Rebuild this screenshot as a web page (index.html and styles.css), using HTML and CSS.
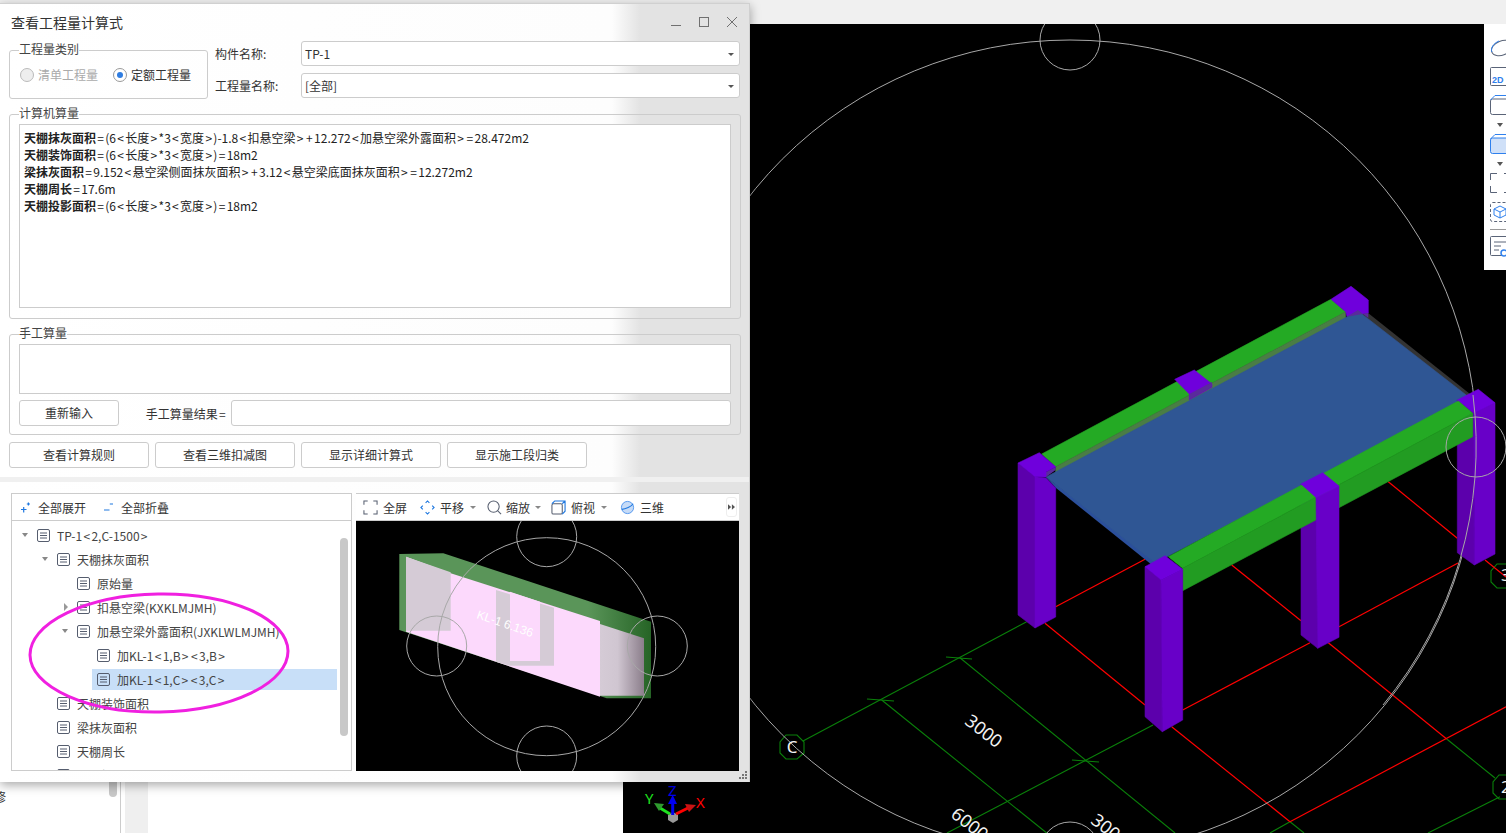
FILE: index.html
```html
<!DOCTYPE html>
<html lang="zh-CN">
<head>
    <meta charset="UTF-8">
    <title>查看工程量计算式</title>
    <link rel="stylesheet" href="styles.css">
</head>
<body>
    <div class="app">
        <div class="top-bar"></div>
        <div class="workspace">
            <div class="side-list">
                <div class="side-scroll"></div>
                <div class="side-text">修</div>
            </div>
            <div class="side-strip"></div>
            <div class="side-main"></div>

            <div class="viewport">
                <svg class="scene" viewBox="623 24 883 809">
                    <!-- axis grid -->
                    <g class="grid-green">
                        <line x1="803" y1="741" x2="1026.7" y2="621.7"/>
                        <line x1="947" y1="833" x2="1153" y2="725"/>
                        <line x1="881.7" y1="700" x2="1046.7" y2="833"/>
                        <line x1="959.3" y1="657.3" x2="1175" y2="833"/>
                        <line x1="1446.7" y1="739" x2="1495" y2="778"/>
                        <line x1="1290" y1="821.7" x2="1304" y2="833"/>
                        <line x1="1290" y1="821.7" x2="1270" y2="833"/>
                        <line x1="1500" y1="796.7" x2="1428" y2="833"/>
                        <line x1="867" y1="699" x2="894" y2="701"/>
                        <line x1="946" y1="657" x2="972" y2="659"/>
                        <line x1="1072" y1="760" x2="1099" y2="762"/>
                        <polygon points="786,735 797,735 804,742 804,753 797,759 786,759 780,753 780,742"/>
                        <polygon points="1497,564 1508,564 1514,571 1514,582 1508,588 1497,588 1491,582 1491,571"/>
                        <polygon points="1499,775 1510,775 1516,782 1516,793 1510,799 1499,799 1493,793 1493,782"/>
                    </g>
                    <g class="grid-red">
                        <line x1="1055.7" y1="606.7" x2="1145" y2="559.3"/>
                        <line x1="1045" y1="623.3" x2="1145" y2="705"/>
                        <line x1="1171.7" y1="726.7" x2="1290" y2="821.7"/>
                        <line x1="1182.7" y1="710" x2="1310" y2="642.7"/>
                        <line x1="1328.3" y1="642.7" x2="1446.7" y2="739"/>
                        <line x1="1506" y1="706.7" x2="1290" y2="821.7"/>
                        <line x1="1339" y1="626.7" x2="1458" y2="563"/>
                        <line x1="1231.7" y1="565" x2="1301" y2="620.7"/>
                        <line x1="1388.3" y1="481.7" x2="1457.3" y2="538.3"/>
                        <line x1="1485" y1="560" x2="1506" y2="577"/>
                    </g>
                    <g class="grid-white">
                        <circle cx="1070" cy="447" r="407"/>
                        <circle cx="1070" cy="40" r="30"/>
                        <circle cx="1070" cy="852" r="30"/>
                    </g>

                    <!-- far side of the slab -->
                    <polygon class="c-edge" points="1358,305 1470,394 1467,398 1356,310"/>

                    <!-- back beam and columns -->
                    <polygon class="c-beam-top" points="1041.7,454 1331,299.3 1345.7,311.7 1055.7,466.7"/>
                    <polygon class="c-beam-under" points="1055.7,466.7 1345.7,311.7 1345.7,319 1055.7,474"/>
                    <polygon class="c-col-top" points="1331,299.3 1351,286.3 1368.3,300 1368.3,313 1347,316.7 1345.7,311.7"/>
                    <polygon class="c-col-top" points="1174.7,379.3 1194.3,370 1212,384 1212,387.3 1189.3,400 1189.3,394"/>

                    <!-- slab -->
                    <polygon class="c-slab-edge" points="1046,477 1056,488 1152,565 1158,561"/>
                    <polygon class="c-slab" points="1046,477 1358,311 1470,398 1155,563"/>
                    <polygon class="c-col-over" points="1347,316.7 1358,310 1368.3,318 1368.3,313"/>
                    <polygon class="c-col-over" points="1189.3,394 1212,382 1212,387.3 1189.3,400"/>
                    <polygon class="c-col-over" points="1046,477 1055.7,470 1055.7,466.7 1046,472"/>

                    <!-- column A -->
                    <polygon class="c-col-left" points="1018,463 1035,476.7 1035,628 1018,615"/>
                    <polygon class="c-col-right" points="1035,476.7 1046,478 1055.7,488 1055.7,617 1035,628"/>
                    <polygon class="c-col-top" points="1018,463 1039.3,452.7 1055.7,466.7 1046,472 1046,477 1035,476.7"/>

                    <!-- column D, behind the front beam -->
                    <polygon class="c-col-left" points="1457.3,400 1474,413.3 1474.3,565 1457.3,552.7"/>
                    <polygon class="c-col-right" points="1474,413.3 1495,402.7 1495,554 1474.3,565"/>
                    <polygon class="c-col-top" points="1457.3,400 1478.3,389.3 1495,402.7 1474,413.3"/>

                    <!-- column C, left face -->
                    <polygon class="c-col-left" points="1301,484 1317.7,496.7 1317.7,648.3 1301,635"/>

                    <!-- front beam -->
                    <polygon class="c-beam-top" points="1168.3,556.7 1458.3,401 1472.7,413.3 1182.7,568.3"/>
                    <polygon class="c-beam-front" points="1182.7,568.3 1472.7,413.3 1472.7,436.7 1182.7,590.7"/>

                    <!-- column C, right face and top -->
                    <polygon class="c-col-right" points="1316,497.5 1339,486 1339,637.3 1317.7,648.3"/>
                    <polygon class="c-col-top" points="1301,484 1322.7,472.7 1339,486 1316,497.5"/>

                    <!-- column B -->
                    <polygon class="c-col-left" points="1145,566.7 1161,580 1162.3,731.7 1145,716.7"/>
                    <polygon class="c-col-right" points="1161,580 1182.7,569.3 1182.7,720 1162.3,731.7"/>
                    <polygon class="c-col-top" points="1145,566.7 1165,555.7 1182.7,569.3 1161,580"/>

                    <circle class="ring-front" cx="1476" cy="447" r="30"/>
                    <path class="ring-front" d="M1473 395 A407 407 0 0 1 1383 705"/>

                    <text class="dim-text" transform="translate(980 736) rotate(38)" text-anchor="middle">3000</text>
                    <text class="dim-text" transform="translate(966 829) rotate(38)" text-anchor="middle">6000</text>
                    <text class="dim-text" transform="translate(1102 832) rotate(38)" text-anchor="middle">300</text>
                    <text class="bubble-text" x="792" y="753" text-anchor="middle">C</text>
                    <text class="bubble-text" x="1501" y="581">3</text>
                    <text class="bubble-text" x="1501" y="793">2</text>

                    <!-- axis gizmo -->
                    <polygon class="gz-base" points="673,812 678,815 678,820 673,823 668,820 668,815"/>
                    <path class="gz-x" d="M676 814 L688 808"/>
                    <polygon class="gz-x-head" points="685,804 696,805 689,812"/>
                    <path class="gz-y" d="M670 814 L660 808"/>
                    <polygon class="gz-y-head" points="654,803 664,804 659,811"/>
                    <path class="gz-z" d="M672.7 815 L672.7 802"/>
                    <polygon class="gz-z-head" points="672.7,795 677,804 668,804"/>
                    <text class="gz-label gz-lx" x="696" y="808">X</text>
                    <text class="gz-label gz-ly" x="645" y="804">Y</text>
                    <text class="gz-label gz-lz" x="668" y="796">Z</text>
                </svg>

                <div class="view-tools">
                    <svg class="vt-icon" viewBox="0 0 20 20"><ellipse cx="12" cy="10" rx="11" ry="7" transform="rotate(-22 12 10)"/><path class="vt-blue" d="M2 14 C0 10 4 5 9 3"/></svg>
                    <svg class="vt-icon vt-tight" viewBox="0 0 20 20"><rect x=".5" y=".5" width="26" height="18" rx="1"/><text class="vt-2d" x="2" y="16">2D</text></svg>
                    <svg class="vt-icon vt-tight" viewBox="0 0 20 20"><rect x=".5" y="4" width="26" height="15.5" rx="2"/><path class="vt-blue" d="M.5 5 L5 .5 H26"/></svg>
                    <div class="vt-caret"></div>
                    <svg class="vt-icon vt-tight" viewBox="0 0 20 20"><rect class="vt-fill" x=".5" y="4" width="26" height="15.5" rx="2"/><path class="vt-blue" d="M.5 5 L5 .5 H26"/></svg>
                    <div class="vt-caret"></div>
                    <svg class="vt-icon" viewBox="0 0 20 20"><path d="M7 .5 H.5 V7 M.5 13 V19.5 H7 M14 .5 H20 M14 19.5 H20"/></svg>
                    <svg class="vt-icon vt-mid" viewBox="0 0 20 20"><rect class="vt-dash" x=".5" y=".5" width="26" height="19" rx="2"/><path class="vt-blue" d="M10 4 L16 7 V13 L10 16 L4 13 V7 Z M4 7 L10 10 L16 7 M10 10 V16"/></svg>
                    <div class="vt-sep"></div>
                    <svg class="vt-icon" viewBox="0 0 20 20"><rect x=".5" y=".5" width="26" height="19" rx="1"/><path d="M4 6 H16 M4 10 H11 M4 14 H9"/><circle class="vt-ring" cx="14" cy="17" r="3"/></svg>
                </div>
            </div>
        </div>

        <div class="dialog">
            <div class="title-bar">
                <span class="title-text">查看工程量计算式</span>
                <div class="win-btns">
                    <svg viewBox="0 0 12 12"><path d="M1 9.5 H11"/></svg>
                    <svg viewBox="0 0 12 12"><rect x="1.5" y="1.5" width="9" height="9"/></svg>
                    <svg viewBox="0 0 12 12"><path d="M1 1 L11 11 M11 1 L1 11"/></svg>
                </div>
            </div>

            <div class="dialog-top">
                <div class="top-form">
                    <div class="group type-group">
                        <span class="group-title">工程量类别</span>
                        <label class="radio disabled"><span class="radio-dot"></span>清单工程量</label>
                        <label class="radio"><span class="radio-dot checked"></span>定额工程量</label>
                    </div>
                    <div class="name-fields">
                        <div class="field-row">
                            <span class="field-label">构件名称:</span>
                            <div class="select">TP-1<span class="select-arrow"></span></div>
                        </div>
                        <div class="field-row">
                            <span class="field-label">工程量名称:</span>
                            <div class="select">[全部]<span class="select-arrow"></span></div>
                        </div>
                    </div>
                </div>

                <div class="group auto-group">
                    <span class="group-title">计算机算量</span>
                    <div class="text-box formula-box">
                        <div><b>天棚抹灰面积</b><i>=</i>(6<i>&lt;</i>长度<i>&gt;</i>*3<i>&lt;</i>宽度<i>&gt;</i>)-1.8<i>&lt;</i>扣悬空梁<i>&gt;</i><i>+</i>12.272<i>&lt;</i>加悬空梁外露面积<i>&gt;</i><i>=</i>28.472m2</div>
                        <div><b>天棚装饰面积</b><i>=</i>(6<i>&lt;</i>长度<i>&gt;</i>*3<i>&lt;</i>宽度<i>&gt;</i>)<i>=</i>18m2</div>
                        <div><b>梁抹灰面积</b><i>=</i>9.152<i>&lt;</i>悬空梁侧面抹灰面积<i>&gt;</i><i>+</i>3.12<i>&lt;</i>悬空梁底面抹灰面积<i>&gt;</i><i>=</i>12.272m2</div>
                        <div><b>天棚周长</b><i>=</i>17.6m</div>
                        <div><b>天棚投影面积</b><i>=</i>(6<i>&lt;</i>长度<i>&gt;</i>*3<i>&lt;</i>宽度<i>&gt;</i>)<i>=</i>18m2</div>
                    </div>
                </div>

                <div class="group manual-group">
                    <span class="group-title">手工算量</span>
                    <div class="text-box manual-box"></div>
                    <div class="manual-row">
                        <button class="btn retype-btn">重新输入</button>
                        <span class="result-label">手工算量结果<i>=</i></span>
                        <div class="result-input"></div>
                    </div>
                </div>

                <div class="action-row">
                    <button class="btn action-btn">查看计算规则</button>
                    <button class="btn action-btn">查看三维扣减图</button>
                    <button class="btn action-btn">显示详细计算式</button>
                    <button class="btn action-btn">显示施工段归类</button>
                </div>
            </div>

            <div class="splitter"></div>

            <div class="dialog-bottom">
                <div class="panel tree-panel">
                    <div class="panel-bar">
                        <span class="bar-item"><svg class="bar-icon" viewBox="0 0 14 14"><path class="blue-line" d="M1 9.5 H6.5 M3.7 7 V12.5 M6.8 4 H10 M8.4 2.4 V5.6"/></svg>全部展开</span>
                        <span class="bar-item"><svg class="bar-icon" viewBox="0 0 14 14"><path class="blue-line" d="M1 10 H6.5 M6.8 4 H10"/></svg>全部折叠</span>
                    </div>
                    <div class="tree">
                        <div class="tree-row d0"><span class="arrow down"></span><svg class="doc" viewBox="0 0 13 13"><rect x=".5" y=".5" width="12" height="12" rx="1.5"/><path d="M3 4 H10 M3 6.5 H10 M3 9 H10"/></svg>TP-1<i>&lt;</i>2,C-1500<i>&gt;</i></div>
                        <div class="tree-row d1"><span class="arrow down"></span><svg class="doc" viewBox="0 0 13 13"><rect x=".5" y=".5" width="12" height="12" rx="1.5"/><path d="M3 4 H10 M3 6.5 H10 M3 9 H10"/></svg>天棚抹灰面积</div>
                        <div class="tree-row d2"><span class="arrow"></span><svg class="doc" viewBox="0 0 13 13"><rect x=".5" y=".5" width="12" height="12" rx="1.5"/><path d="M3 4 H10 M3 6.5 H10 M3 9 H10"/></svg>原始量</div>
                        <div class="tree-row d2"><span class="arrow right"></span><svg class="doc" viewBox="0 0 13 13"><rect x=".5" y=".5" width="12" height="12" rx="1.5"/><path d="M3 4 H10 M3 6.5 H10 M3 9 H10"/></svg>扣悬空梁(KXKLMJMH)</div>
                        <div class="tree-row d2"><span class="arrow down"></span><svg class="doc" viewBox="0 0 13 13"><rect x=".5" y=".5" width="12" height="12" rx="1.5"/><path d="M3 4 H10 M3 6.5 H10 M3 9 H10"/></svg>加悬空梁外露面积(JXKLWLMJMH)</div>
                        <div class="tree-row d3"><span class="arrow"></span><svg class="doc" viewBox="0 0 13 13"><rect x=".5" y=".5" width="12" height="12" rx="1.5"/><path d="M3 4 H10 M3 6.5 H10 M3 9 H10"/></svg>加KL-1<i>&lt;</i>1,B<i>&gt;</i><i>&lt;</i>3,B<i>&gt;</i></div>
                        <div class="tree-row d3 selected"><span class="arrow"></span><svg class="doc" viewBox="0 0 13 13"><rect x=".5" y=".5" width="12" height="12" rx="1.5"/><path d="M3 4 H10 M3 6.5 H10 M3 9 H10"/></svg>加KL-1<i>&lt;</i>1,C<i>&gt;</i><i>&lt;</i>3,C<i>&gt;</i></div>
                        <div class="tree-row d1"><span class="arrow"></span><svg class="doc" viewBox="0 0 13 13"><rect x=".5" y=".5" width="12" height="12" rx="1.5"/><path d="M3 4 H10 M3 6.5 H10 M3 9 H10"/></svg>天棚装饰面积</div>
                        <div class="tree-row d1"><span class="arrow"></span><svg class="doc" viewBox="0 0 13 13"><rect x=".5" y=".5" width="12" height="12" rx="1.5"/><path d="M3 4 H10 M3 6.5 H10 M3 9 H10"/></svg>梁抹灰面积</div>
                        <div class="tree-row d1"><span class="arrow"></span><svg class="doc" viewBox="0 0 13 13"><rect x=".5" y=".5" width="12" height="12" rx="1.5"/><path d="M3 4 H10 M3 6.5 H10 M3 9 H10"/></svg>天棚周长</div>
                        <div class="tree-row d1"><span class="arrow"></span><svg class="doc" viewBox="0 0 13 13"><rect x=".5" y=".5" width="12" height="12" rx="1.5"/><path d="M3 4 H10 M3 6.5 H10 M3 9 H10"/></svg>天棚投影面积</div>
                        <div class="tree-scroll"></div>
                    </div>
                </div>

                <div class="panel view-panel">
                    <div class="panel-bar view-bar">
                        <span class="bar-item fit"><svg class="bar-icon wide" viewBox="0 0 16 16"><path class="dark-line" d="M5 1 H1 V5 M11 1 H15 V5 M5 15 H1 V11 M11 15 H15 V11"/></svg>全屏</span>
                        <span class="bar-item pan"><svg class="bar-icon wide" viewBox="0 0 16 16"><path class="blue-line" d="M6 3 L8 1 L10 3 M6 13 L8 15 L10 13 M3 6 L1 8 L3 10 M13 6 L15 8 L13 10"/></svg>平移<i class="mini-caret"></i></span>
                        <span class="bar-item zoom"><svg class="bar-icon wide" viewBox="0 0 16 16"><circle class="dark-line" cx="7" cy="7" r="6"/><path class="dark-line" d="M11.5 11.5 L15 15"/></svg>缩放<i class="mini-caret"></i></span>
                        <span class="bar-item top"><svg class="bar-icon wide" viewBox="0 0 16 16"><rect class="dark-line" x="1" y="4" width="11" height="11" rx="1.5"/><path class="blue-line" d="M1 4 L4 1 H15 V12 L12 15 M12 4 L15 1"/></svg>俯视<i class="mini-caret"></i></span>
                        <span class="bar-item three"><svg class="bar-icon wide" viewBox="0 0 16 16"><circle class="orb" cx="8" cy="8" r="6.5"/><path class="blue-line" d="M2 10 C6 10 12 7 14 4"/></svg>三维</span>
                        <span class="more-btn"><svg viewBox="0 0 9 7"><path d="M0 0 L4 3.5 L0 7 Z M5 0 L9 3.5 L5 7 Z"/></svg></span>
                    </div>
                    <svg class="preview" viewBox="356 521 383 250">
                        <defs>
                            <linearGradient id="fadeFace" x1="0" x2="1" y1="0" y2="0">
                                <stop offset="0" stop-color="#d5cbd6"/>
                                <stop offset=".4" stop-color="#d0c6d1"/>
                                <stop offset="1" stop-color="#8b7e8b"/>
                            </linearGradient>
                            <linearGradient id="fadeGreen" x1="0" x2="1" y1="0" y2="0">
                                <stop offset="0" stop-color="#5a9559"/>
                                <stop offset=".75" stop-color="#5a9559"/>
                                <stop offset="1" stop-color="#266426"/>
                            </linearGradient>
                        </defs>
                        <polygon fill="url(#fadeGreen)" points="399.3,554 443.3,553.3 651,621.7 651,698.3 606.7,698.3 399.3,630"/>
                        <polygon fill="#fcd9fc" points="406,556.7 450.7,573.3 600,621 600,696.7 406,631.7"/>
                        <polygon fill="#d5cbd6" points="406,556.7 450.7,572.3 450.7,630.7 406,630.7"/>
                        <polygon fill="#d5cbd6" points="496,590 554,607.7 554,665.7 510,665.7 496,661.7"/>
                        <polygon fill="#fcd9fc" points="510,591.7 540,601.7 540,661 510,661"/>
                        <polygon fill="url(#fadeFace)" points="600,624 644,638.3 644,695.7 600,695.7"/>
                        <g class="grid-white">
                            <circle cx="546.7" cy="646.7" r="109"/>
                            <circle cx="546.7" cy="536.7" r="30"/>
                            <circle cx="436.7" cy="646" r="30"/>
                            <circle cx="657.3" cy="646" r="30"/>
                            <circle cx="546.7" cy="756" r="30"/>
                        </g>
                        <text class="kl-text" transform="translate(476 618) rotate(19)">KL-1 6.136</text>
                    </svg>
                </div>
            </div>

            <svg class="grip" viewBox="0 0 9 9"><path d="M7 0h2v2H7zM4 3h2v2H4zM7 3h2v2H7zM1 6h2v2H1zM4 6h2v2H4zM7 6h2v2H7z"/></svg>
            <svg class="mark" viewBox="0 0 264 124"><ellipse cx="132" cy="62" rx="129" ry="59" transform="rotate(-1 132 62)"/></svg>
        </div>
    </div>
</body>
</html>
```

FILE: styles.css
```css
* {
    box-sizing: border-box;
}

body {
    margin: 0;
    font-family: "Noto Sans CJK SC", "Noto Sans", sans-serif;
    font-size: 12px;
    color: #333;
    background: #fff;
    overflow: hidden;
}

/* operators in this UI font sit wider than in Noto */
.formula-box i,
.tree-row > i,
.result-label i {
    font-style: normal;
    margin: 0 1.3px;
}

.app {
    position: relative;
    width: 1506px;
    height: 833px;
    display: flex;
    flex-direction: column;
    overflow: hidden;
}

.top-bar {
    height: 24px;
    background: #f0f0f0;
    flex: none;
}

.workspace {
    flex: 1;
    display: flex;
    min-height: 0;
}

.side-list {
    width: 121px;
    position: relative;
    background: #fff;
    border-right: 1px solid #ccc;
}

.side-scroll {
    position: absolute;
    left: 109px;
    top: 700px;
    width: 8px;
    height: 73px;
    border-radius: 4px;
    background: #c8c8c8;
}

.side-text {
    position: absolute;
    left: -6px;
    top: 764px;
    font-size: 12px;
}

.side-strip {
    width: 27px;
    margin-left: 0;
    border-left: 4px solid #fff;
    background: #efefef;
}

.side-main {
    width: 475px;
    background: #fff;
}

.viewport {
    flex: 1;
    position: relative;
    background: #000;
    min-width: 0;
}

.scene {
    display: block;
    width: 883px;
    height: 809px;
}

.grid-green line,
.grid-green polygon {
    stroke: #0a800a;
    stroke-width: 1.1;
    fill: none;
}

.grid-red line {
    stroke: #f00;
    stroke-width: 1.2;
}

.grid-white circle {
    stroke: #a8a8a8;
    stroke-width: 1;
    fill: none;
}

.ring-front {
    stroke: #a8a8a8;
    stroke-width: 1;
    fill: none;
}

/* same colour stroke closes the antialias seams between faces */
.c-edge { fill: #333; }
.c-beam-top { fill: #24aa24; stroke: #24aa24; stroke-width: .6; }
.c-beam-front { fill: #229c22; stroke: #229c22; stroke-width: .6; }
.c-beam-under { fill: #4a7d45; stroke: #4a7d45; stroke-width: .6; }
.c-col-top { fill: #6f00dc; stroke: #6f00dc; stroke-width: .6; }
.c-col-left { fill: #5c00ac; stroke: #5c00ac; stroke-width: .6; }
.c-col-right { fill: #6800c8; stroke: #6800c8; stroke-width: .6; }
.c-col-over { fill: #5a2a9c; }
.c-slab { fill: #2f5694; stroke: #2f5694; stroke-width: .6; }
.c-slab-edge { fill: #2b4f9b; }

.dim-text {
    fill: #f2f2f2;
    font-family: "Noto Sans", sans-serif;
    font-size: 18px;
}

.bubble-text {
    fill: #f2f2f2;
    font-family: "Noto Sans", sans-serif;
    font-size: 17px;
}

.gz-base { fill: #999; }
.gz-x { stroke: #f00; stroke-width: 3; }
.gz-x-head { fill: #c81414; }
.gz-y { stroke: #1fe01f; stroke-width: 3; }
.gz-y-head { fill: #2f9a2f; }
.gz-z { stroke: #0000f0; stroke-width: 3; }
.gz-z-head { fill: #0000f0; }

.gz-label {
    font-family: "Noto Sans", sans-serif;
    font-size: 15px;
}

.gz-lx { fill: #f00; }
.gz-ly { fill: #1fe01f; }
.gz-lz { fill: #0000f0; }

.view-tools {
    position: absolute;
    right: 0;
    top: 0;
    width: 22px;
    height: 246px;
    padding: 14px 0 0 6px;
    background: #fff;
    display: flex;
    flex-direction: column;
    align-items: flex-start;
    overflow: hidden;
}

.vt-icon {
    width: 20px;
    height: 20px;
    flex: none;
    overflow: visible;
    margin-bottom: 9px;
}

.vt-tight {
    margin-bottom: 8px;
}

.vt-mid {
    margin-bottom: 7px;
}

.vt-icon rect,
.vt-icon ellipse,
.vt-icon path {
    fill: none;
    stroke: #5a6478;
    stroke-width: 1;
}

.vt-icon .vt-blue {
    fill: none;
    stroke: #2f80ed;
}

.vt-icon .vt-fill {
    fill: #cfe0f8;
    stroke: #2f80ed;
}

.vt-icon .vt-dash {
    stroke-dasharray: 3 2;
}

.vt-ring {
    fill: #fff;
    stroke: #2f80ed;
    stroke-width: 1.5;
}

.vt-2d {
    fill: #2f80ed;
    font-family: "Liberation Sans", sans-serif;
    font-weight: bold;
    font-size: 9px;
}

.vt-caret {
    width: 0;
    height: 0;
    margin: 0 0 7px 7px;
    border-left: 3px solid transparent;
    border-right: 3px solid transparent;
    border-top: 4px solid #555;
}

.vt-sep {
    width: 22px;
    height: 1px;
    flex: none;
    margin-bottom: 6px;
    background: #999;
}

/* dialog floats over the main window */
.dialog {
    position: absolute;
    left: 0;
    top: 3px;
    width: 750px;
    height: 779px;
    display: flex;
    flex-direction: column;
    background: linear-gradient(90deg, #fff 0, #fdfdfd 612px, #e3e3e3 640px);
    border-top: 1px solid #d0d0d0;
    border-right: 1px solid #d0d0d0;
    box-shadow: 0 3px 10px rgba(0,0,0,0.35);
}

.title-bar {
    height: 37px;
    flex: none;
    display: flex;
    align-items: center;
    justify-content: space-between;
    padding: 0 11px 2px 11px;
}

.title-text {
    font-size: 14px;
    color: #333;
}

.win-btns {
    display: flex;
    gap: 16px;
}

.win-btns svg {
    width: 12px;
    height: 12px;
}

.win-btns path,
.win-btns rect {
    fill: none;
    stroke: #707070;
    stroke-width: 1;
}

.dialog-top {
    padding: 0 8px 0 9px;
    flex: none;
}

.top-form {
    display: flex;
    gap: 7px;
    height: 58px;
}

.group {
    position: relative;
    border: 1px solid #ccc;
    border-radius: 3px;
}

.group-title {
    position: absolute;
    left: 9px;
    top: -10px;
    line-height: 16px;
    background: #fff;
    color: #444;
}

.type-group {
    width: 199px;
    height: 49px;
    margin-top: 9px;
    display: flex;
    align-items: center;
    gap: 15px;
    padding: 0 0 0 10px;
}

.radio {
    display: flex;
    align-items: center;
    gap: 4px;
    color: #333;
}

.radio.disabled {
    color: #aaa;
}

.radio-dot {
    width: 14px;
    height: 14px;
    border-radius: 50%;
    border: 1px solid #999;
    background: #fff;
    position: relative;
}

.radio.disabled .radio-dot {
    background: #eee;
    border-color: #bbb;
}

.radio-dot.checked::after {
    content: "";
    position: absolute;
    left: 3px;
    top: 3px;
    width: 6px;
    height: 6px;
    border-radius: 50%;
    background: #2f7de1;
}

.name-fields {
    flex: 1;
    display: flex;
    flex-direction: column;
    gap: 7px;
}

.field-row {
    display: flex;
    align-items: center;
    height: 25px;
}

.field-label {
    width: 86px;
    flex: none;
}

.select {
    flex: 1;
    height: 25px;
    margin-right: 1px;
    line-height: 24px;
    padding-left: 3px;
    background: #fff;
    border: 1px solid #ccc;
    border-radius: 3px;
    position: relative;
}

.select-arrow {
    position: absolute;
    right: 5px;
    top: 11px;
    width: 0;
    height: 0;
    border-left: 3px solid transparent;
    border-right: 3px solid transparent;
    border-top: 3px solid #555;
}

.auto-group {
    margin-top: 15px;
    height: 205px;
    padding: 9px 9px 10px;
}

.text-box {
    background: #fff;
    border: 1px solid #ccc;
}

.formula-box {
    height: 184px;
    padding: 4px 4px;
    line-height: 17px;
    color: #222;
}

.manual-group {
    margin-top: 15px;
    height: 101px;
    padding: 9px 9px 0;
}

.manual-box {
    height: 50px;
}

.manual-row {
    display: flex;
    align-items: center;
    margin-top: 6px;
}

.btn {
    height: 26px;
    padding: 0 0 2px;
    font: inherit;
    color: #333;
    background: #fff;
    border: 1px solid #ccc;
    border-radius: 3px;
}

.retype-btn {
    width: 100px;
}

.result-label {
    width: 112px;
    text-align: right;
    padding-right: 4px;
}

.result-input {
    flex: 1;
    height: 26px;
    border: 1px solid #ccc;
    border-radius: 3px;
    background: #fff;
}

.action-row {
    display: flex;
    gap: 6px;
    margin-top: 7px;
}

.action-btn {
    width: 140px;
}

.splitter {
    height: 5px;
    margin-top: 9px;
    flex: none;
    background: #f0f0f0;
}

.dialog-bottom {
    display: flex;
    gap: 4px;
    margin-top: 11px;
    padding-left: 11px;
    height: 278px;
    flex: none;
}

.panel {
    border: 1px solid #ccc;
    border-bottom: none;
    background: #fff;
    display: flex;
    flex-direction: column;
}

.tree-panel {
    width: 341px;
    border-bottom: 1px solid #ccc;
}

.view-panel {
    width: 383px;
    border-left: none;
    border-right: none;
    border-top: 1px solid #ccc;
}

.panel-bar {
    height: 27px;
    flex: none;
    display: flex;
    align-items: center;
    gap: 17px;
    padding-left: 8px;
    border-bottom: 1px solid #ccc;
    background: #fff;
}

.bar-item {
    display: inline-flex;
    align-items: center;
    gap: 4px;
}

.bar-icon {
    width: 14px;
    height: 14px;
    flex: none;
}

.bar-icon.wide {
    width: 15px;
    height: 15px;
}

.blue-line {
    fill: none;
    stroke: #1f78e0;
    stroke-width: 1.2;
}

.dark-line {
    fill: none;
    stroke: #555d6e;
    stroke-width: 1.1;
}

.orb {
    fill: #c6dbf7;
    stroke: #4f94ee;
    stroke-width: 1;
}

.view-bar {
    gap: 11px;
    padding-left: 7px;
    position: relative;
}

.view-bar .bar-item {
    gap: 5px;
}

.view-bar .zoom {
    gap: 4px;
}

.view-bar .pan,
.view-bar .three {
    margin-left: 2px;
}

.view-bar .top {
    margin-left: -1px;
}

.mini-caret {
    width: 0;
    height: 0;
    margin-left: 1px;
    border-left: 3px solid transparent;
    border-right: 3px solid transparent;
    border-top: 3px solid #888;
}

.more-btn {
    position: absolute;
    right: 2px;
    top: 3px;
    width: 11px;
    height: 20px;
    display: flex;
    align-items: center;
    justify-content: center;
    border: 1px solid #eee;
    border-radius: 3px;
}

.more-btn svg {
    width: 7px;
    height: 6px;
}

.more-btn path {
    fill: #555;
}

.tree {
    position: relative;
    flex: 1;
    overflow: hidden;
    padding-top: 2px;
    min-height: 0;
}

.tree-row {
    height: 24px;
    display: flex;
    align-items: center;
    color: #444;
    white-space: nowrap;
}

.d0 { padding-left: 10px; }
.d1 { padding-left: 30px; }
.d2 { padding-left: 50px; }
.d3 { padding-left: 70px; }

.tree-row.selected {
    background: linear-gradient(transparent 2px, #c8dff8 2px, #c8dff8 23px, transparent 23px) no-repeat 80px 0 / 245px 24px;
}

.arrow {
    width: 14px;
    height: 14px;
    flex: none;
    margin-right: 1px;
    position: relative;
}

.arrow.down::after {
    content: "";
    position: absolute;
    left: 0;
    top: 5px;
    border-left: 3.5px solid transparent;
    border-right: 3.5px solid transparent;
    border-top: 4px solid #888;
}

.arrow.right::after {
    content: "";
    position: absolute;
    left: 2px;
    top: 3px;
    border-top: 4px solid transparent;
    border-bottom: 4px solid transparent;
    border-left: 4px solid #999;
}

.doc {
    width: 13px;
    height: 13px;
    flex: none;
    margin-right: 7px;
}

.doc rect,
.doc path {
    fill: none;
    stroke: #555d6e;
    stroke-width: 1;
}

.tree-scroll {
    position: absolute;
    left: 328px;
    top: 17px;
    width: 8px;
    height: 198px;
    border-radius: 4px;
    background: #c8c8c8;
}

.preview {
    display: block;
    width: 383px;
    height: 250px;
    background: #000;
}

.kl-text {
    fill: #fff;
    font-family: "Liberation Sans", sans-serif;
    font-size: 12px;
}

.grip {
    position: absolute;
    right: 2px;
    bottom: 2px;
    width: 9px;
    height: 9px;
}

.grip path {
    fill: #777;
}

/* hand drawn marker ring over the tree */
.mark {
    position: absolute;
    left: 27px;
    top: 587px;
    width: 264px;
    height: 124px;
    overflow: visible;
}

.mark ellipse {
    fill: none;
    stroke: #f020e0;
    stroke-width: 3;
}
```
